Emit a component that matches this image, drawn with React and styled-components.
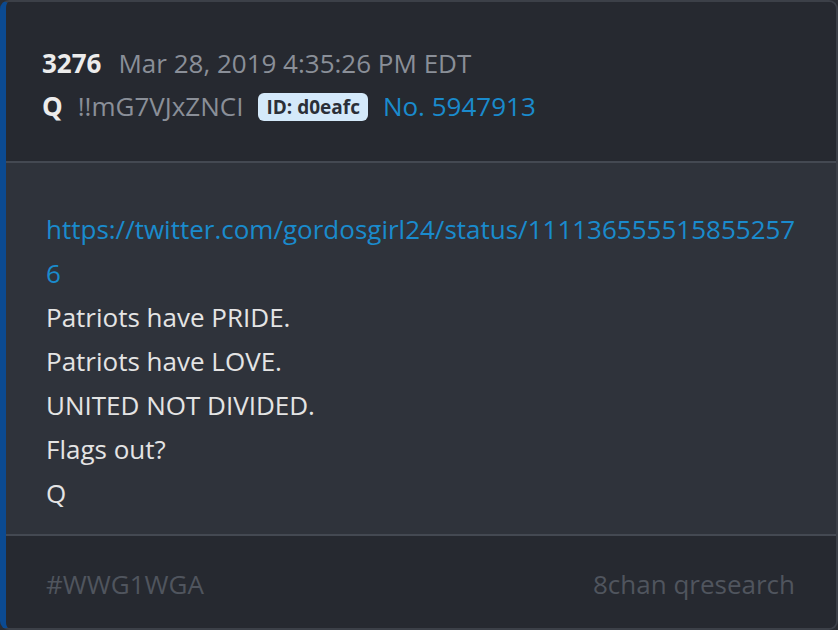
import React from 'react';
import styled, { createGlobalStyle } from 'styled-components';

const GlobalStyle = createGlobalStyle`
  html, body {
    margin: 0;
    padding: 0;
    background: #2a2d33;
  }
  body {
    font-family: "Open Sans", "Noto Sans", sans-serif;
  }
`;

const post = {
  num: 3276,
  date: 'Mar 28, 2019 4:35:26 PM EDT',
  name: 'Q',
  trip: '!!mG7VJxZNCI',
  id: 'd0eafc',
  no: 5947913,
  link: 'https://twitter.com/gordosgirl24/status/1111365555158552576',
  lines: ['Patriots have PRIDE.', 'Patriots have LOVE.', 'UNITED NOT DIVIDED.', 'Flags out?', 'Q'],
  tag: '#WWG1WGA',
  board: '8chan qresearch',
};

export default function App() {
  return (
    <>
      <GlobalStyle />
      <Card>
        <Header>
          <Row>
            <PostNum>{post.num}</PostNum>
            <Muted>{post.date}</Muted>
          </Row>
          <Row>
            <Name>{post.name}</Name>
            <Muted>{post.trip}</Muted>
            <IdBadge>ID: {post.id}</IdBadge>
            <PostNo>No. {post.no}</PostNo>
          </Row>
        </Header>

        <Body>
          <Link>{post.link}</Link>
          {post.lines.map((l, i) => (
            <Line key={i}>{l}</Line>
          ))}
        </Body>

        <Footer>
          <FooterText>{post.tag}</FooterText>
          <FooterText>{post.board}</FooterText>
        </Footer>
      </Card>
    </>
  );
}

const Card = styled.div`
  box-sizing: border-box;
  width: 838px;
  height: 630px;
  display: flex;
  flex-direction: column;
  border: 2px solid #3c4048;
  border-left: 6px solid #0b4a91;
  border-radius: 9px;
  overflow: hidden;
  background: #2f333b;
  font-size: 26px;
`;

const Header = styled.div`
  background: #262930;
  padding: 40px 36px 33px;
  border-bottom: 2px solid #444952;
`;

const Row = styled.div`
  display: flex;
  align-items: center;
  gap: 15px;
  height: 43px;
  line-height: 43px;
`;

const PostNum = styled.span`
  color: #ececec;
  font-weight: 700;
  margin-right: 2px;
`;

const Name = styled.span`
  color: #ececec;
  font-weight: 700;
`;

const Muted = styled.span`
  color: #8a8f98;
`;

const IdBadge = styled.span`
  background: #d4e9fa;
  color: #2b2f37;
  font-weight: 700;
  font-size: 19px;
  line-height: 28px;
  height: 28px;
  padding: 0 8px;
  border-radius: 6px;
`;

const PostNo = styled.span`
  color: #1a8bcd;
`;

const Body = styled.div`
  flex: 1;
  padding: 44px 40px 0;
  line-height: 44px;
`;

const Link = styled.div`
  color: #1a8bcd;
  word-break: break-all;
`;

const Line = styled.div`
  color: #e4e4e4;
`;

const Footer = styled.div`
  display: flex;
  justify-content: space-between;
  background: #262930;
  border-top: 2px solid #444952;
  padding: 26px 41px 22px 40px;
  line-height: 44px;
`;

const FooterText = styled.span`
  color: #50555e;
`;
